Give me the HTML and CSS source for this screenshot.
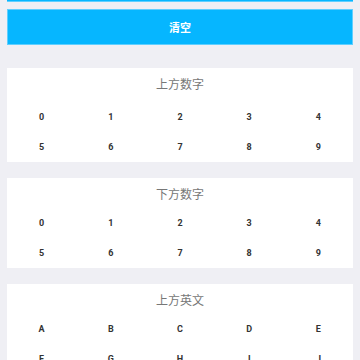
FILE: index.html
```html
<!DOCTYPE html>
<html>
<head>
<meta charset="utf-8">
<link rel="stylesheet" href="styles.css">
</head>
<body>
<div class="page">
  <div class="topbar"></div>
  <div class="clear-btn">清空</div>
  <div class="card card-first">
    <div class="card-title">上方数字</div>
    <div class="keys">
      <div class="key">0</div><div class="key">1</div><div class="key">2</div><div class="key">3</div><div class="key">4</div>
      <div class="key">5</div><div class="key">6</div><div class="key">7</div><div class="key">8</div><div class="key">9</div>
    </div>
  </div>
  <div class="card">
    <div class="card-title">下方数字</div>
    <div class="keys">
      <div class="key">0</div><div class="key">1</div><div class="key">2</div><div class="key">3</div><div class="key">4</div>
      <div class="key">5</div><div class="key">6</div><div class="key">7</div><div class="key">8</div><div class="key">9</div>
    </div>
  </div>
  <div class="card">
    <div class="card-title">上方英文</div>
    <div class="keys">
      <div class="key">A</div><div class="key">B</div><div class="key">C</div><div class="key">D</div><div class="key">E</div>
      <div class="key">F</div><div class="key">G</div><div class="key">H</div><div class="key">I</div><div class="key">J</div>
    </div>
  </div>
</div>
</body>
</html>
```
FILE: styles.css
```css
html, body {
  margin: 0;
  padding: 0;
  background: #efeff4;
  overflow: hidden;
}
.page {
  padding: 0 7px;
  display: flex;
  flex-direction: column;
  font-family: Roboto, "Noto Sans CJK SC", sans-serif;
}
.topbar {
  height: 1px;
  background: #06b6ff;
  border-bottom: 1px solid #5fcfff;
  margin-bottom: 7px;
}
.clear-btn {
  height: 34px;
  background: #06b6ff;
  border: 1px solid #5fcfff;
  color: #fff;
  font-weight: bold;
  font-size: 11px;
  display: flex;
  align-items: center;
  justify-content: center;
  font-family: "Noto Sans CJK SC", sans-serif;
  margin-bottom: 23px;
}
.card {
  background: #fff;
  padding-top: 8px;
  margin-bottom: 16px;
}
.card-title {
  text-align: center;
  font-size: 12px;
  line-height: 15px;
  color: #777;
  font-family: "Noto Sans CJK SC", sans-serif;
  margin-bottom: 7px;
}
.card-first .card-title {
  margin-bottom: 11px;
}
.keys {
  display: grid;
  grid-template-columns: repeat(5, 1fr);
}
.key {
  height: 30px;
  line-height: 30px;
  text-align: center;
  font-size: 9px;
  font-weight: bold;
  color: #333;
}
```
